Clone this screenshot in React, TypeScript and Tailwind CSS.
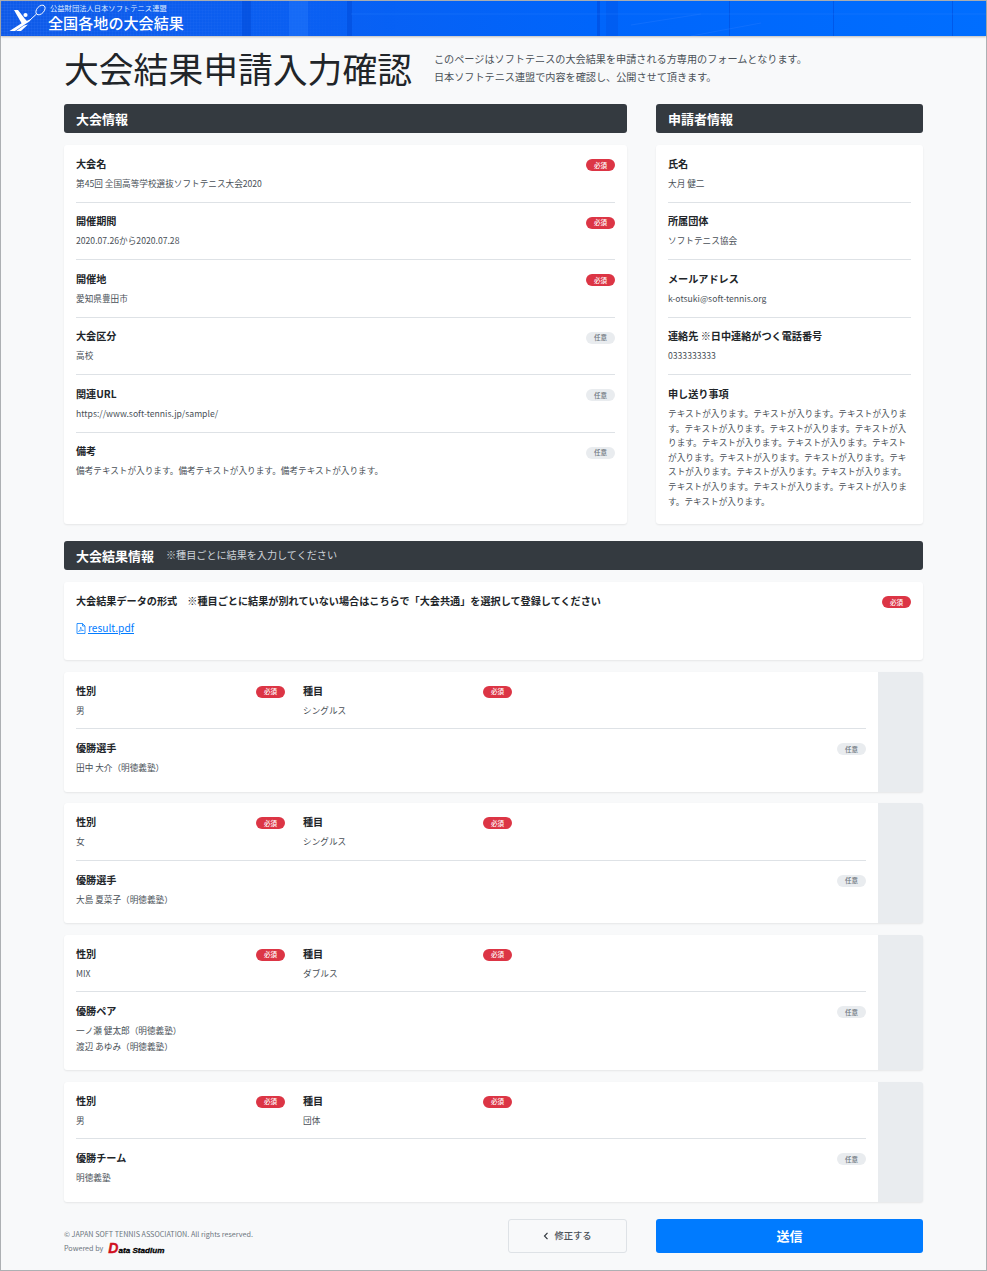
const Badge = ({ req, shift = "mt-[2.5px]" }: { req?: boolean; shift?: string }) => (
  <span className={`${shift} ${req ? "flex h-[12px] w-[29px] shrink-0 items-center justify-center rounded-full bg-[#dc3545] text-[6.5px] leading-none font-medium text-white" : "flex h-[12px] w-[29px] shrink-0 items-center justify-center rounded-full bg-[#e9ecef] text-[6.5px] leading-none font-medium text-[#6c757d]"}`}>
    {req ? "必須" : "任意"}
  </span>
);

const Field = ({ label, req, badge = true, children, last, cls, shift }: { label: string; req?: boolean; badge?: boolean; children: React.ReactNode; last?: boolean; cls?: string; shift?: string }) => (
  <div className={`${last ? "" : "border-b border-[#dee2e6]"} ${cls ?? "pb-[11px] mb-[11.9px]"}`}>
    <div className="flex h-[14px] items-center justify-between">
      <span className="text-[10.15px] leading-[14px] font-bold text-[#212529]">{label}</span>
      {badge && <Badge req={req} shift={shift} />}
    </div>
    <div className="mt-[5px] text-[8.65px] leading-[14.6px] text-[#495057]">{children}</div>
  </div>
);

const SectionBar = ({ title, note }: { title: string; note?: string }) => (
  <div className="flex h-[29px] items-center gap-[12px] rounded-[3px] bg-[#343a40] px-[12px] text-white">
    <span className="text-[13px] font-bold leading-none">{title}</span>
    {note && <span className="text-[10.1px] leading-none text-[#ced4da]">{note}</span>}
  </div>
);

const Logo = () => (
  <svg width="40" height="32" viewBox="9 1 40 32" className="shrink-0">
    <g fill="#fff">
      <path d="M14 10 L18 10 L25 19 L28 22 L22 24 Z" />
      <path d="M9.5 31 L15 31 L30 21 L31 19 L22 23 Z" />
      <path d="M16 31 L21 31 L28 24.5 L24 25.5 Z" />
      <circle cx="25.5" cy="15" r="2.1" />
    </g>
    <path d="M30 20 L36.5 14" stroke="#fff" strokeWidth="1" fill="none" />
    <ellipse cx="40.5" cy="10" rx="3.6" ry="5.6" transform="rotate(42 40.5 10)" stroke="#fff" strokeWidth="0.9" fill="none" />
  </svg>
);

const Entry = ({ gender, kind, winLabel, winners }: { gender: string; kind: string; winLabel: string; winners: string[] }) => (
  <div className="flex overflow-hidden rounded-[3px] bg-[#e9ecef] shadow-[0_1px_2px_rgba(0,0,0,0.08)]">
    <div className="w-[814px] bg-white px-[12px] pt-[12px] pb-[16.9px]">
      <div className="mb-[11.9px] flex gap-[18px] border-b border-[#dee2e6] pb-[11px]">
        <div className="w-[209px]">
          <div className="flex h-[14px] items-center justify-between">
            <span className="text-[10.15px] leading-[14px] font-bold text-[#212529]">性別</span>
            <Badge req shift="mt-[2px]" />
          </div>
          <div className="mt-[5px] text-[8.65px] leading-[14.6px] text-[#495057]">{gender}</div>
        </div>
        <div className="w-[209px]">
          <div className="flex h-[14px] items-center justify-between">
            <span className="text-[10.15px] leading-[14px] font-bold text-[#212529]">種目</span>
            <Badge req shift="mt-[2px]" />
          </div>
          <div className="mt-[5px] text-[8.65px] leading-[14.6px] text-[#495057]">{kind}</div>
        </div>
      </div>
      <Field label={winLabel} last cls="" shift="mt-[2px]">
        <div className="flex flex-col gap-[1px]">
          {winners.map((w) => <div key={w}>{w}</div>)}
        </div>
      </Field>
    </div>
  </div>
);

export default function App() {
  return (
    <div className="flex h-[1271px] flex-col border border-[#adb0b3] bg-[#f8f9fa]" style={{ fontFamily: '"Noto Sans CJK JP", "Noto Sans", sans-serif' }}>
      <header className="relative h-[35px] shrink-0 overflow-hidden bg-[linear-gradient(90deg,#0f5ae8_0%,#0a5ff2_30%,#0065fb_60%,#006eff_100%)] shadow-[0_1px_2px_rgba(0,0,0,0.25)]">
        <svg className="absolute inset-0" width="985" height="35" viewBox="0 0 985 35">
          <defs>
            <pattern id="mesh" width="3" height="3" patternUnits="userSpaceOnUse">
              <path d="M3 0 H0 V3" stroke="#5b94ff" strokeWidth="0.6" fill="none" opacity="0.35" />
            </pattern>
            <linearGradient id="fade" x1="0" x2="1" y1="0" y2="0">
              <stop offset="0" stopColor="#fff" stopOpacity="1" />
              <stop offset="0.4" stopColor="#fff" stopOpacity="0.7" />
              <stop offset="1" stopColor="#fff" stopOpacity="0" />
            </linearGradient>
            <mask id="meshfade">
              <rect x="0" y="0" width="400" height="35" fill="url(#fade)" />
            </mask>
          </defs>
          <rect x="0" y="0" width="400" height="35" fill="url(#mesh)" mask="url(#meshfade)" />
          <g fill="#0047d6" opacity="0.5">
            <rect x="241" y="0" width="9" height="35" />
            <rect x="346" y="0" width="5" height="35" />
            <rect x="596" y="0" width="3" height="35" />
            <rect x="605" y="0" width="12" height="35" opacity="0.5" />
            <rect x="728" y="0" width="1" height="35" />
            <rect x="832" y="0" width="1" height="35" />
            <rect x="951" y="0" width="1" height="35" />
          </g>
          <rect x="288" y="0" width="19" height="35" fill="#2f80ff" opacity="0.35" />
          <path d="M350 13 H985 M630 24 L700 13 M690 35 L760 22" stroke="#2c7dff" strokeWidth="1" opacity="0.35" fill="none" />
        </svg>
        <div className="relative flex h-full items-start pl-[8px]">
          <Logo />
          <div className="-ml-[1px] flex flex-col">
            <span className="ml-[2px] mt-[3px] text-[7.3px] leading-[9px] text-[#dbe8ff]">公益財団法人日本ソフトテニス連盟</span>
            <span className="text-[15.1px] leading-[18px] font-medium text-white">全国各地の大会結果</span>
          </div>
        </div>
      </header>

      <main className="flex flex-1 flex-col px-[63px]">
        <div className="mt-[8px] flex h-[49px] items-center">
          <h1 className="pb-[1px] text-[34.8px] leading-none font-normal text-[#212529]">大会結果申請入力確認</h1>
          <p className="ml-[22px] pb-[2px] text-[10.13px] leading-[17.5px] text-[#495057]">
            このページはソフトテニスの大会結果を申請される方専用のフォームとなります。<br />
            日本ソフトテニス連盟で内容を確認し、公開させて頂きます。
          </p>
        </div>

        <div className="mt-[11px] flex gap-[29px]">
          <section className="w-[563px]">
            <SectionBar title="大会情報" />
            <div className="mt-[12px] h-[379px] rounded-[3px] bg-white px-[12px] pt-[12px] shadow-[0_1px_2px_rgba(0,0,0,0.08)]">
              <Field label="大会名" req>第45回 全国高等学校選抜ソフトテニス大会2020</Field>
              <Field label="開催期間" req>2020.07.26から2020.07.28</Field>
              <Field label="開催地" req>愛知県豊田市</Field>
              <Field label="大会区分">高校</Field>
              <Field label="関連URL">https://www.soft-tennis.jp/sample/</Field>
              <Field label="備考" last>備考テキストが入ります。備考テキストが入ります。備考テキストが入ります。</Field>
            </div>
          </section>
          <section className="w-[267px]">
            <SectionBar title="申請者情報" />
            <div className="mt-[12px] h-[379px] rounded-[3px] bg-white px-[12px] pt-[12px] shadow-[0_1px_2px_rgba(0,0,0,0.08)]">
              <Field label="氏名" badge={false}>大月 健二</Field>
              <Field label="所属団体" badge={false}>ソフトテニス協会</Field>
              <Field label="メールアドレス" badge={false}>k-otsuki@soft-tennis.org</Field>
              <Field label="連絡先 ※日中連絡がつく電話番号" badge={false}>0333333333</Field>
              <Field label="申し送り事項" badge={false} last>
                テキストが入ります。テキストが入ります。テキストが入ります。テキストが入ります。テキストが入ります。テキストが入ります。テキストが入ります。テキストが入ります。テキストが入ります。テキストが入ります。テキストが入ります。テキストが入ります。テキストが入ります。テキストが入ります。テキストが入ります。テキストが入ります。テキストが入ります。テキストが入ります。
              </Field>
            </div>
          </section>
        </div>

        <div className="mt-[17px]">
          <SectionBar title="大会結果情報" note="※種目ごとに結果を入力してください" />
        </div>

        <div className="mt-[12px] h-[78px] rounded-[3px] bg-white px-[12px] pt-[12px] shadow-[0_1px_2px_rgba(0,0,0,0.08)]">
          <div className="flex h-[14px] items-center justify-between">
            <span className="text-[10.15px] leading-[14px] font-bold text-[#212529]">大会結果データの形式　※種目ごとに結果が別れていない場合はこちらで「大会共通」を選択して登録してください</span>
            <Badge req shift="mt-[2px]" />
          </div>
          <a className="mt-[12px] flex items-center text-[10.2px] leading-[16px] text-[#007bff] underline">
            <svg width="10" height="11" viewBox="0 0 10 11" fill="none" stroke="#007bff" strokeWidth="0.8" className="mr-[2px]">
              <path d="M1 .5 H6.5 L9 3 V10.5 H1 Z M6.5 .5 V3 H9" />
              <path d="M2.5 8.5 C4 7.5 5 5.5 4.7 4 C5 6 6 7.5 7.5 7.5 C6 7.3 4 7.8 2.5 8.5 Z" strokeWidth="0.6" />
            </svg>
            result.pdf
          </a>
        </div>

        <div className="mt-[11.7px] flex flex-col gap-[11.5px]">
          <Entry gender="男" kind="シングルス" winLabel="優勝選手" winners={["田中 大介（明徳義塾）"]} />
          <Entry gender="女" kind="シングルス" winLabel="優勝選手" winners={["大島 夏菜子（明徳義塾）"]} />
          <Entry gender="MIX" kind="ダブルス" winLabel="優勝ペア" winners={["一ノ瀬 健太郎（明徳義塾）", "渡辺 あゆみ（明徳義塾）"]} />
          <Entry gender="男" kind="団体" winLabel="優勝チーム" winners={["明徳義塾"]} />
        </div>

        <footer className="mt-[17px] flex items-start">
          <div className="w-[444px] pt-[8px] text-[7.2px] leading-[14.5px] text-[#6c757d]">
            <div>© JAPAN SOFT TENNIS ASSOCIATION. All rights reserved.</div>
            <div className="flex items-center">
              <span>Powered by</span>
              <span className="ml-[5px] text-[8.1px] leading-none font-bold italic text-black [-webkit-text-stroke:0.3px_black]" style={{ fontFamily: '"Liberation Sans", sans-serif' }}>
                <span className="text-[14px] text-[#d01020] [-webkit-text-stroke:0.4px_#d01020]">D</span>ata Stadium
              </span>
            </div>
          </div>
          <button className="flex h-[34.6px] w-[119px] items-center justify-center gap-[5px] rounded-[3px] border border-[#dee2e6] bg-[#f8f9fa] text-[9.3px] font-medium text-[#495057]">
            <svg width="6" height="8" viewBox="0 0 6 8" fill="none" stroke="#343a40" strokeWidth="1.2"><path d="M4.5 .8 L1.5 4 L4.5 7.2" /></svg>
            修正する
          </button>
          <button className="ml-[29px] flex h-[34.6px] w-[267px] items-center justify-center rounded-[3px] bg-[#007bff] text-[13px] font-bold text-white">送信</button>
        </footer>
      </main>
    </div>
  );
}
